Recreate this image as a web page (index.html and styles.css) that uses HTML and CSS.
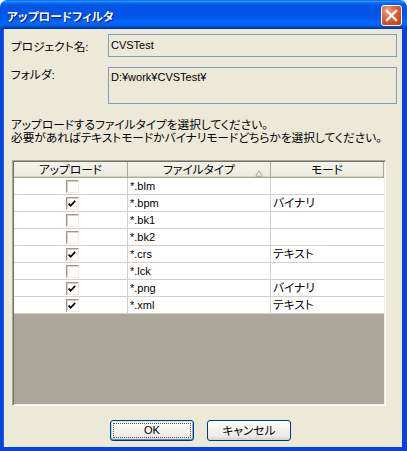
FILE: index.html
```html
<!DOCTYPE html>
<html lang="ja">
<head>
<meta charset="utf-8">
<title>アップロードフィルタ</title>
<link rel="stylesheet" href="styles.css">
</head>
<body>
<div class="window">
  <div class="titlebar">
    <span class="title">アップロードフィルタ</span>
    <span class="close" aria-label="閉じる">
      <svg viewBox="0 0 21 21" width="21" height="21"><path d="M6 6 L15 15 M15 6 L6 15" stroke="#fff" stroke-width="2.4" stroke-linecap="square" fill="none"/></svg>
    </span>
  </div>
  <div class="client">
    <div class="field-row">
      <span class="label jp">プロジェクト名:</span>
      <div class="field">CVSTest</div>
    </div>
    <div class="field-row tall">
      <span class="label jp">フォルダ:</span>
      <div class="field">D:¥work¥CVSTest¥</div>
    </div>
    <p class="instr jp">アップロードするファイルタイプを選択してください。<br>必要があればテキストモードかバイナリモードどちらかを選択してください。</p>
    <div class="list">
      <div class="head jp">
        <div class="hcell">アップロード</div>
        <div class="hcell sorted">ファイルタイプ<svg class="sort" viewBox="0 0 8 7" width="8" height="7"><path d="M4 0.8 L7.3 6.3 L0.7 6.3 Z" fill="none" stroke="#aca899" stroke-width="1"/></svg></div>
        <div class="hcell">モード</div>
      </div>
      <div class="row"><div class="cell chk"><span class="box"></span></div><div class="cell">*.blm</div><div class="cell jp"></div></div>
      <div class="row"><div class="cell chk"><span class="box on"><svg viewBox="0 0 11 11" width="11" height="11"><path d="M1.6 5.6 L3.6 7.8 L8.2 2.8" fill="none" stroke="#000" stroke-width="1.7"/></svg></span></div><div class="cell">*.bpm</div><div class="cell jp">バイナリ</div></div>
      <div class="row"><div class="cell chk"><span class="box"></span></div><div class="cell">*.bk1</div><div class="cell jp"></div></div>
      <div class="row"><div class="cell chk"><span class="box"></span></div><div class="cell">*.bk2</div><div class="cell jp"></div></div>
      <div class="row"><div class="cell chk"><span class="box on"><svg viewBox="0 0 11 11" width="11" height="11"><path d="M1.6 5.6 L3.6 7.8 L8.2 2.8" fill="none" stroke="#000" stroke-width="1.7"/></svg></span></div><div class="cell">*.crs</div><div class="cell jp">テキスト</div></div>
      <div class="row"><div class="cell chk"><span class="box"></span></div><div class="cell">*.lck</div><div class="cell jp"></div></div>
      <div class="row"><div class="cell chk"><span class="box on"><svg viewBox="0 0 11 11" width="11" height="11"><path d="M1.6 5.6 L3.6 7.8 L8.2 2.8" fill="none" stroke="#000" stroke-width="1.7"/></svg></span></div><div class="cell">*.png</div><div class="cell jp">バイナリ</div></div>
      <div class="row"><div class="cell chk"><span class="box on"><svg viewBox="0 0 11 11" width="11" height="11"><path d="M1.6 5.6 L3.6 7.8 L8.2 2.8" fill="none" stroke="#000" stroke-width="1.7"/></svg></span></div><div class="cell">*.xml</div><div class="cell jp">テキスト</div></div>
      <div class="empty"></div>
    </div>
    <div class="buttons">
      <button class="btn default">OK</button>
      <button class="btn jp">キャンセル</button>
    </div>
  </div>
</div>
</body>
</html>
```

FILE: styles.css
```css
html, body {
  margin: 0;
  padding: 0;
  background: #ffffff;
}
body {
  font-family: "Liberation Sans", "Noto Sans CJK JP", sans-serif;
  font-size: 11px;
  line-height: 13px;
  color: #000;
  font-feature-settings: "palt";
}
.jp { font-size: 11.7px; }
.window {
  width: 407px;
  height: 451px;
  display: flex;
  flex-direction: column;
  overflow: hidden;
  border-radius: 7px 7px 0 0;
}
.titlebar {
  height: 29px;
  flex: none;
  display: flex;
  align-items: center;
  justify-content: space-between;
  padding: 0 5px 0 7px;
  box-sizing: border-box;
  background: linear-gradient(#0058ee 0%, #3593ff 4%, #288eff 6%, #127dff 8%, #036ffc 10%, #0262ee 14%, #0057e5 20%, #0054e3 24%, #0055eb 56%, #005bf5 66%, #026afe 76%, #0062ef 86%, #0052d6 92%, #0040ab 96%, #003092 100%);
}
.title {
  color: #fff;
  font-weight: bold;
  font-size: 11.7px;
  padding-top: 3px;
  text-shadow: 1px 1px 0 #0a1883;
}
.close {
  width: 21px;
  height: 21px;
  box-sizing: border-box;
  border: 1px solid #fff;
  border-radius: 3px;
  background: radial-gradient(circle at 30% 25%, #f1a58a 0%, #e5693f 35%, #d2471a 75%, #c03a12 100%);
  display: flex;
  align-items: center;
  justify-content: center;
  margin-top: 1px;
}
.close svg { display: block; margin: -1px; }
.client {
  flex: 1;
  background: #ece9d8;
  border-left: 3px solid #0a40dc;
  border-right: 4px solid #0a40dc;
  border-bottom: 4px solid #0a40dc;
  box-shadow: inset 1px 0 0 #1662f0, inset -1px 0 0 #0b3ad0;
  display: flex;
  flex-direction: column;
}
.field-row {
  display: flex;
  margin-top: 5px;
  padding-right: 6px;
}
.field-row.tall { margin-top: 10px; }
.label {
  width: 97px;
  padding-left: 8px;
  padding-top: 6px;
  flex: none;
}
.field {
  flex: 1;
  height: 23px;
  box-sizing: border-box;
  border: 1px solid #7f9db9;
  padding: 4px 2px 0 2px;
  background: #ece9d8;
}
.tall .label { padding-top: 1px; }
.tall .field { height: 37px; padding-top: 3px; }
.instr {
  margin: 14px 0 0 8px;
  padding: 0;
}
.list {
  margin: 16px 0 0 9px;
  width: 374px;
  height: 246px;
  box-sizing: border-box;
  border: 1px solid;
  border-color: #aca899 #ffffff #ffffff #aca899;
  box-shadow: inset 1px 1px 0 #716f64, inset -1px -1px 0 #f1efe2;
  padding: 1px;
  display: flex;
  flex-direction: column;
  background: #fff;
}
.head, .row {
  display: grid;
  grid-template-columns: 114px 143px 1fr;
  flex: none;
}
.head {
  height: 16px;
  background: linear-gradient(#f4f3ec, #ebeadb);
  box-shadow: inset 0 -1px 0 #aca899, inset 0 -2px 0 #d6d2c2;
}
.hcell {
  position: relative;
  text-align: center;
  line-height: 15px;
  border-right: 1px solid #aca899;
}
.sort {
  position: absolute;
  right: 7px;
  top: 8px;
}
.row {
  height: 17px;
  box-sizing: border-box;
  border-bottom: 1px solid #d4d0c8;
}
.cell {
  border-right: 1px solid #d4d0c8;
  padding-left: 2px;
  line-height: 16px;
  white-space: nowrap;
}
.cell:last-child { border-right: 0; }
.chk {
  display: flex;
  justify-content: center;
  align-items: center;
  padding-left: 0;
}
.box {
  width: 13px;
  height: 13px;
  box-sizing: border-box;
  border: 1px solid;
  border-color: #9c998c #f1efe2 #f1efe2 #9c998c;
  box-shadow: inset 1px 1px 0 #d8d5c8;
  background: #fff;
  margin-left: 4px;
  margin-top: 1px;
}
.box svg { display: block; }
.empty {
  flex: 1;
  background: #aca899;
}
.buttons {
  display: flex;
  gap: 13px;
  padding-left: 107px;
  margin-top: 14px;
}
.btn {
  position: relative;
  width: 84px;
  height: 21px;
  box-sizing: border-box;
  border: 1px solid #003c74;
  border-radius: 3px;
  background: linear-gradient(#ffffff 0%, #f5f4ef 40%, #ecebe5 80%, #d6d0c5 100%);
  font-family: "Liberation Sans", "Noto Sans CJK JP", sans-serif;
  font-size: 11px;
  font-feature-settings: "palt";
  color: #000;
  padding: 0;
  line-height: 17px;
}
.btn.jp { font-size: 11.7px; }
.btn.default {
  box-shadow: inset 0 1px 0 #cee7ff, inset 0 -1px 0 #6982ee, inset 1px 0 0 #bcd4f6, inset -1px 0 0 #89adf4;
}
.btn.default::after {
  content: "";
  position: absolute;
  left: 2px;
  top: 2px;
  right: 2px;
  bottom: 2px;
  border: 1px dotted #6b5a3a;
}
```
